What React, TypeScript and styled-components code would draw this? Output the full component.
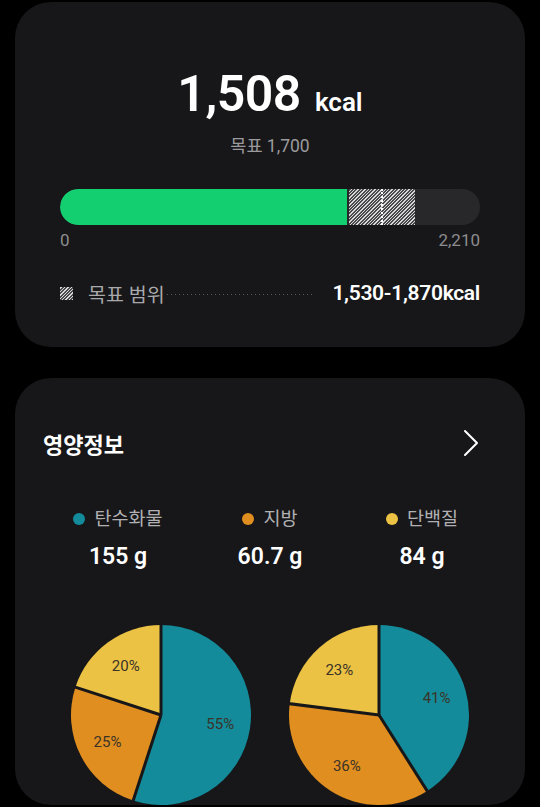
import React from 'react';
import styled, { createGlobalStyle } from 'styled-components';

const FONT = `Roboto, "Noto Sans CJK KR", sans-serif`;

const GlobalStyle = createGlobalStyle`
    html, body {
        margin: 0;
        padding: 0;
        background: #000;
    }
    body {
        font-family: ${FONT};
        color: #fff;
    }
`;

const hatch = `repeating-linear-gradient(
    -45deg,
    #d8d8d8 0px,
    #d8d8d8 1px,
    #4a4a4c 1px,
    #4a4a4c 2.4px
)`;

type Slice = { value: number; color: string };

const COLORS = {
    carb: '#138b9a',
    fat: '#e08e1f',
    protein: '#ebc244',
};

/** 파이 차트 한 개 */
function Pie({ slices }: { slices: Slice[] }) {
    const r = 90;
    const c = 90;
    let acc = 0;
    const point = (frac: number, rad: number) => {
        const a = frac * Math.PI * 2;
        return [c + rad * Math.sin(a), c - rad * Math.cos(a)];
    };
    const parts = slices.map((s) => {
        const start = acc / 100;
        acc += s.value;
        const end = acc / 100;
        const [x1, y1] = point(start, r);
        const [x2, y2] = point(end, r);
        const large = end - start > 0.5 ? 1 : 0;
        const [lx, ly] = point((start + end) / 2, 60);
        return { ...s, start, d: `M${c},${c} L${x1},${y1} A${r},${r} 0 ${large} 1 ${x2},${y2} Z`, lx, ly };
    });

    return (
        <svg width={180} height={180} viewBox="0 0 180 180">
            {parts.map((p, i) => (
                <path key={i} d={p.d} fill={p.color} />
            ))}
            {parts.map((p, i) => {
                const [x, y] = point(p.start, r + 1);
                return <line key={`l${i}`} x1={c} y1={c} x2={x} y2={y} stroke="#17171a" strokeWidth={3} />;
            })}
            {parts.map((p, i) => (
                <text
                    key={`t${i}`}
                    x={p.lx}
                    y={p.ly}
                    fill="#3b3328"
                    fontSize={15}
                    fontFamily={FONT}
                    textAnchor="middle"
                    dominantBaseline="central"
                >
                    {p.value}%
                </text>
            ))}
        </svg>
    );
}

const macros = [
    { label: '탄수화물', value: '155 g', color: COLORS.carb },
    { label: '지방', value: '60.7 g', color: COLORS.fat },
    { label: '단백질', value: '84 g', color: COLORS.protein },
];

export default function App() {
    return (
        <Page>
            <GlobalStyle />
            <Card $top={52} $bottom={41}>
                <Headline>
                    <BigNumber>1,508</BigNumber>
                    <Unit>kcal</Unit>
                </Headline>
                <Goal>목표 1,700</Goal>

                <Track>
                    <Fill />
                    <Range>
                        <Marker />
                    </Range>
                </Track>
                <Scale>
                    <span>0</span>
                    <span>2,210</span>
                </Scale>

                <RangeRow>
                    <HatchBox />
                    <RangeLabel>목표 범위</RangeLabel>
                    <Leader />
                    <RangeValue>1,530-1,870kcal</RangeValue>
                </RangeRow>
            </Card>

            <Card $top={50} $bottom={0}>
                <SectionHeader>
                    <SectionTitle>영양정보</SectionTitle>
                    <svg width="18" height="30" viewBox="0 0 18 30">
                        <path d="M3 3 L15 15 L3 27" fill="none" stroke="#fff" strokeWidth="2" strokeLinecap="round" strokeLinejoin="round" />
                    </svg>
                </SectionHeader>

                <MacroGrid>
                    {macros.map((m) => (
                        <Macro key={m.label}>
                            <MacroLabel>
                                <Dot $color={m.color} />
                                {m.label}
                            </MacroLabel>
                            <MacroValue>{m.value}</MacroValue>
                        </Macro>
                    ))}
                </MacroGrid>

                <Pies>
                    <Pie
                        slices={[
                            { value: 55, color: COLORS.carb },
                            { value: 25, color: COLORS.fat },
                            { value: 20, color: COLORS.protein },
                        ]}
                    />
                    <Pie
                        slices={[
                            { value: 41, color: COLORS.carb },
                            { value: 36, color: COLORS.fat },
                            { value: 23, color: COLORS.protein },
                        ]}
                    />
                </Pies>
            </Card>
        </Page>
    );
}

const Page = styled.div`
    width: 540px;
    height: 807px;
    overflow: hidden;
    background: #000;
    padding: 2px 15px 0;
    box-sizing: border-box;
    display: flex;
    flex-direction: column;
    gap: 31px;
`;

const Card = styled.div<{ $top: number; $bottom: number }>`
    background: #171719;
    border-radius: 36px;
    padding: ${(p) => p.$top}px 45px ${(p) => p.$bottom}px;
    display: flex;
    flex-direction: column;
`;

const Headline = styled.div`
    display: flex;
    justify-content: center;
    align-items: baseline;
    gap: 14px;
    height: 80px;
`;

const BigNumber = styled.div`
    font-size: 50px;
    font-weight: 600;
    line-height: 80px;
    letter-spacing: -0.5px;
`;

const Unit = styled.div`
    font-size: 26px;
    font-weight: 600;
`;

const Goal = styled.div`
    text-align: center;
    font-size: 17.5px;
    color: #9b9b9d;
    margin-top: 2px;
    line-height: 20px;
`;

const Track = styled.div`
    margin-top: 33px;
    height: 36px;
    border-radius: 18px;
    background: #28282a;
    display: flex;
    overflow: hidden;
`;

const Fill = styled.div`
    width: 287px;
    background: #13cf70;
    border-radius: 18px 0 0 18px;
`;

const Range = styled.div`
    width: 66px;
    margin-left: 2px;
    background: ${hatch};
    position: relative;
`;

const Marker = styled.div`
    position: absolute;
    left: 32px;
    top: 0;
    bottom: 0;
    border-left: 2px dotted #fff;
`;

const Scale = styled.div`
    display: flex;
    justify-content: space-between;
    font-size: 17px;
    color: #8c8c8e;
    margin-top: 5px;
    line-height: 20px;
`;

const RangeRow = styled.div`
    display: flex;
    align-items: center;
    margin-top: 30px;
    height: 26px;
`;

const HatchBox = styled.div`
    width: 13px;
    height: 13px;
    background: ${hatch};
    margin-right: 15px;
`;

const RangeLabel = styled.div`
    font-size: 19.5px;
    color: #a9a9ab;
`;

const Leader = styled.div`
    flex: 1;
    height: 1px;
    background-image: linear-gradient(to right, #5c5c5e 1px, transparent 1px);
    background-size: 4px 1px;
    margin: 2px 18px 0 2px;
`;

const RangeValue = styled.div`
    font-size: 21px;
    font-weight: 600;
    color: #fff;
    letter-spacing: -0.3px;
`;

const SectionHeader = styled.div`
    display: flex;
    justify-content: space-between;
    align-items: center;
    margin-left: -17px;
    height: 30px;
`;

const SectionTitle = styled.div`
    font-size: 22px;
    font-weight: 700;
`;

const MacroGrid = styled.div`
    display: grid;
    grid-template-columns: repeat(3, 152px);
    justify-content: center;
    margin-top: 49px;
`;

const Macro = styled.div`
    display: flex;
    flex-direction: column;
    align-items: center;
    gap: 13px;
`;

const MacroLabel = styled.div`
    display: flex;
    align-items: center;
    gap: 9px;
    font-size: 18.5px;
    color: #b1b1b3;
    line-height: 24px;
`;

const Dot = styled.span<{ $color: string }>`
    width: 12px;
    height: 12px;
    border-radius: 50%;
    background: ${(p) => p.$color};
`;

const MacroValue = styled.div`
    font-size: 23px;
    font-weight: 600;
    line-height: 26px;
`;

const Pies = styled.div`
    display: flex;
    justify-content: center;
    gap: 38px;
    margin-top: 55px;
`;
